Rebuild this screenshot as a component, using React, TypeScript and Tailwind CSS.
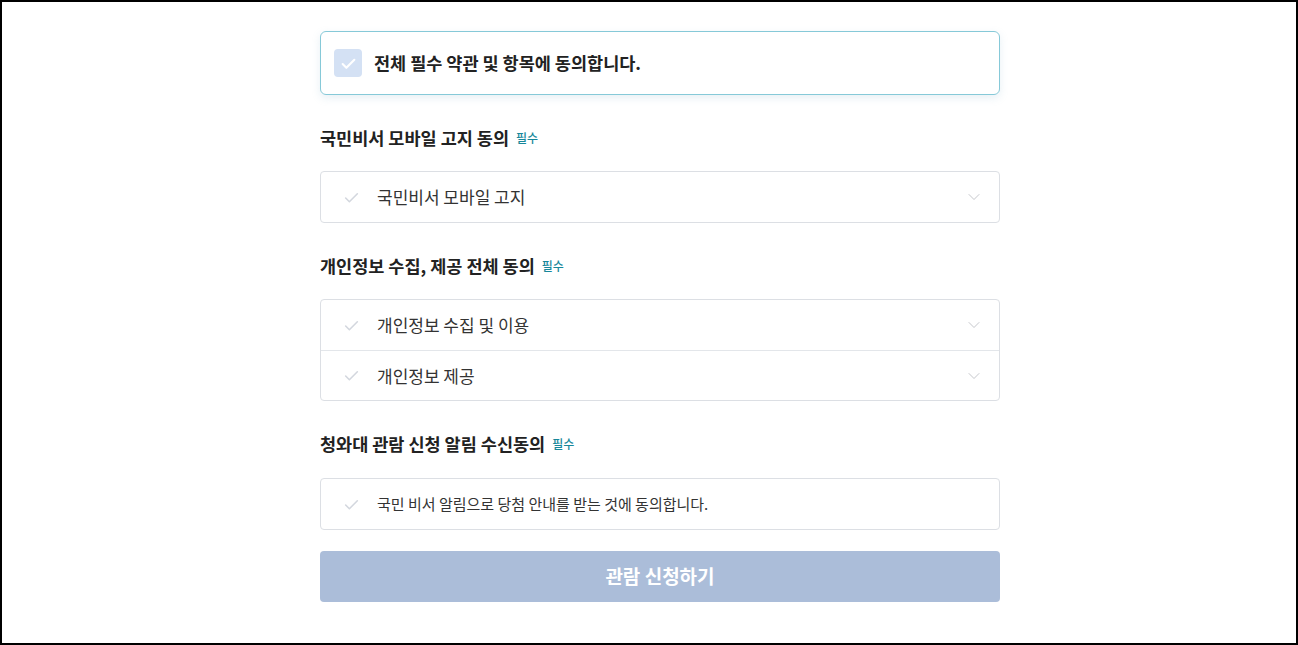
import { ChevronDown } from 'lucide-react'

const font = { fontFamily: '"Noto Sans CJK KR", "Noto Sans", sans-serif' }

function CheckMark({ className, width = 1.6 }: { className: string; width?: number }) {
  return (
    <svg viewBox="0 0 16 16" className={className} fill="none" stroke="currentColor" strokeWidth={width} strokeLinecap="round" strokeLinejoin="round">
      <path d="M2.5 8.5l3.5 3.5 7.5-7.5" />
    </svg>
  )
}

function Row({ label, small, divider }: { label: string; small?: boolean; divider?: boolean }) {
  return (
    <div className={`flex h-[50px] items-center pl-[22px] pr-[15px] ${divider ? 'border-t border-[#e3e6ea]' : ''}`}>
      <CheckMark className="h-[17px] w-[17px] text-[#d3d7de]" width={1.5} />
      <span className={`ml-[17px] flex-1 text-[#333] ${small ? 'text-[15px]' : 'text-[17px]'}`}>{label}</span>
      {!small && <ChevronDown className="h-[20px] w-[20px] text-[#b9bcc2]" strokeWidth={1} />}
    </div>
  )
}

function Heading({ title }: { title: string }) {
  return (
    <div className="flex h-[24px] items-center gap-[7px]">
      <span className="text-[17.5px] font-bold text-[#222]">{title}</span>
      <span className="text-[12px] font-medium text-[#17879a]">필수</span>
    </div>
  )
}

export default function App() {
  return (
    <div style={font} className="h-[645px] border-2 border-black bg-white">
      <div className="ml-[318px] flex w-[680px] flex-col pt-[29px]">
        <div className="flex h-[64px] items-center rounded-[6px] border border-[#86c9d8] pl-[13px] shadow-[0_3px_8px_rgba(120,170,200,0.18)]">
          <div className="flex h-[28px] w-[28px] items-center justify-center rounded-[4px] bg-[#d4e1f4]">
            <CheckMark className="h-[17px] w-[17px] text-white" width={2} />
          </div>
          <span className="ml-[12px] text-[17.5px] font-bold text-[#222]">전체 필수 약관 및 항목에 동의합니다.</span>
        </div>

        <div className="mt-[31px]">
          <Heading title="국민비서 모바일 고지 동의" />
        </div>
        <div className="mt-[21px] rounded-[4px] border border-[#dcdfe4]">
          <Row label="국민비서 모바일 고지" />
        </div>

        <div className="mt-[31px]">
          <Heading title="개인정보 수집, 제공 전체 동의" />
        </div>
        <div className="mt-[21px] rounded-[4px] border border-[#dcdfe4]">
          <Row label="개인정보 수집 및 이용" />
          <Row label="개인정보 제공" divider />
        </div>

        <div className="mt-[31px]">
          <Heading title="청와대 관람 신청 알림 수신동의" />
        </div>
        <div className="mt-[22px] rounded-[4px] border border-[#dcdfe4]">
          <Row label="국민 비서 알림으로 당첨 안내를 받는 것에 동의합니다." small />
        </div>

        <button className="mt-[21px] flex h-[51px] items-center justify-center rounded-[4px] bg-[#abbdd9] text-[19px] font-bold text-white">
          관람 신청하기
        </button>
      </div>
    </div>
  )
}
